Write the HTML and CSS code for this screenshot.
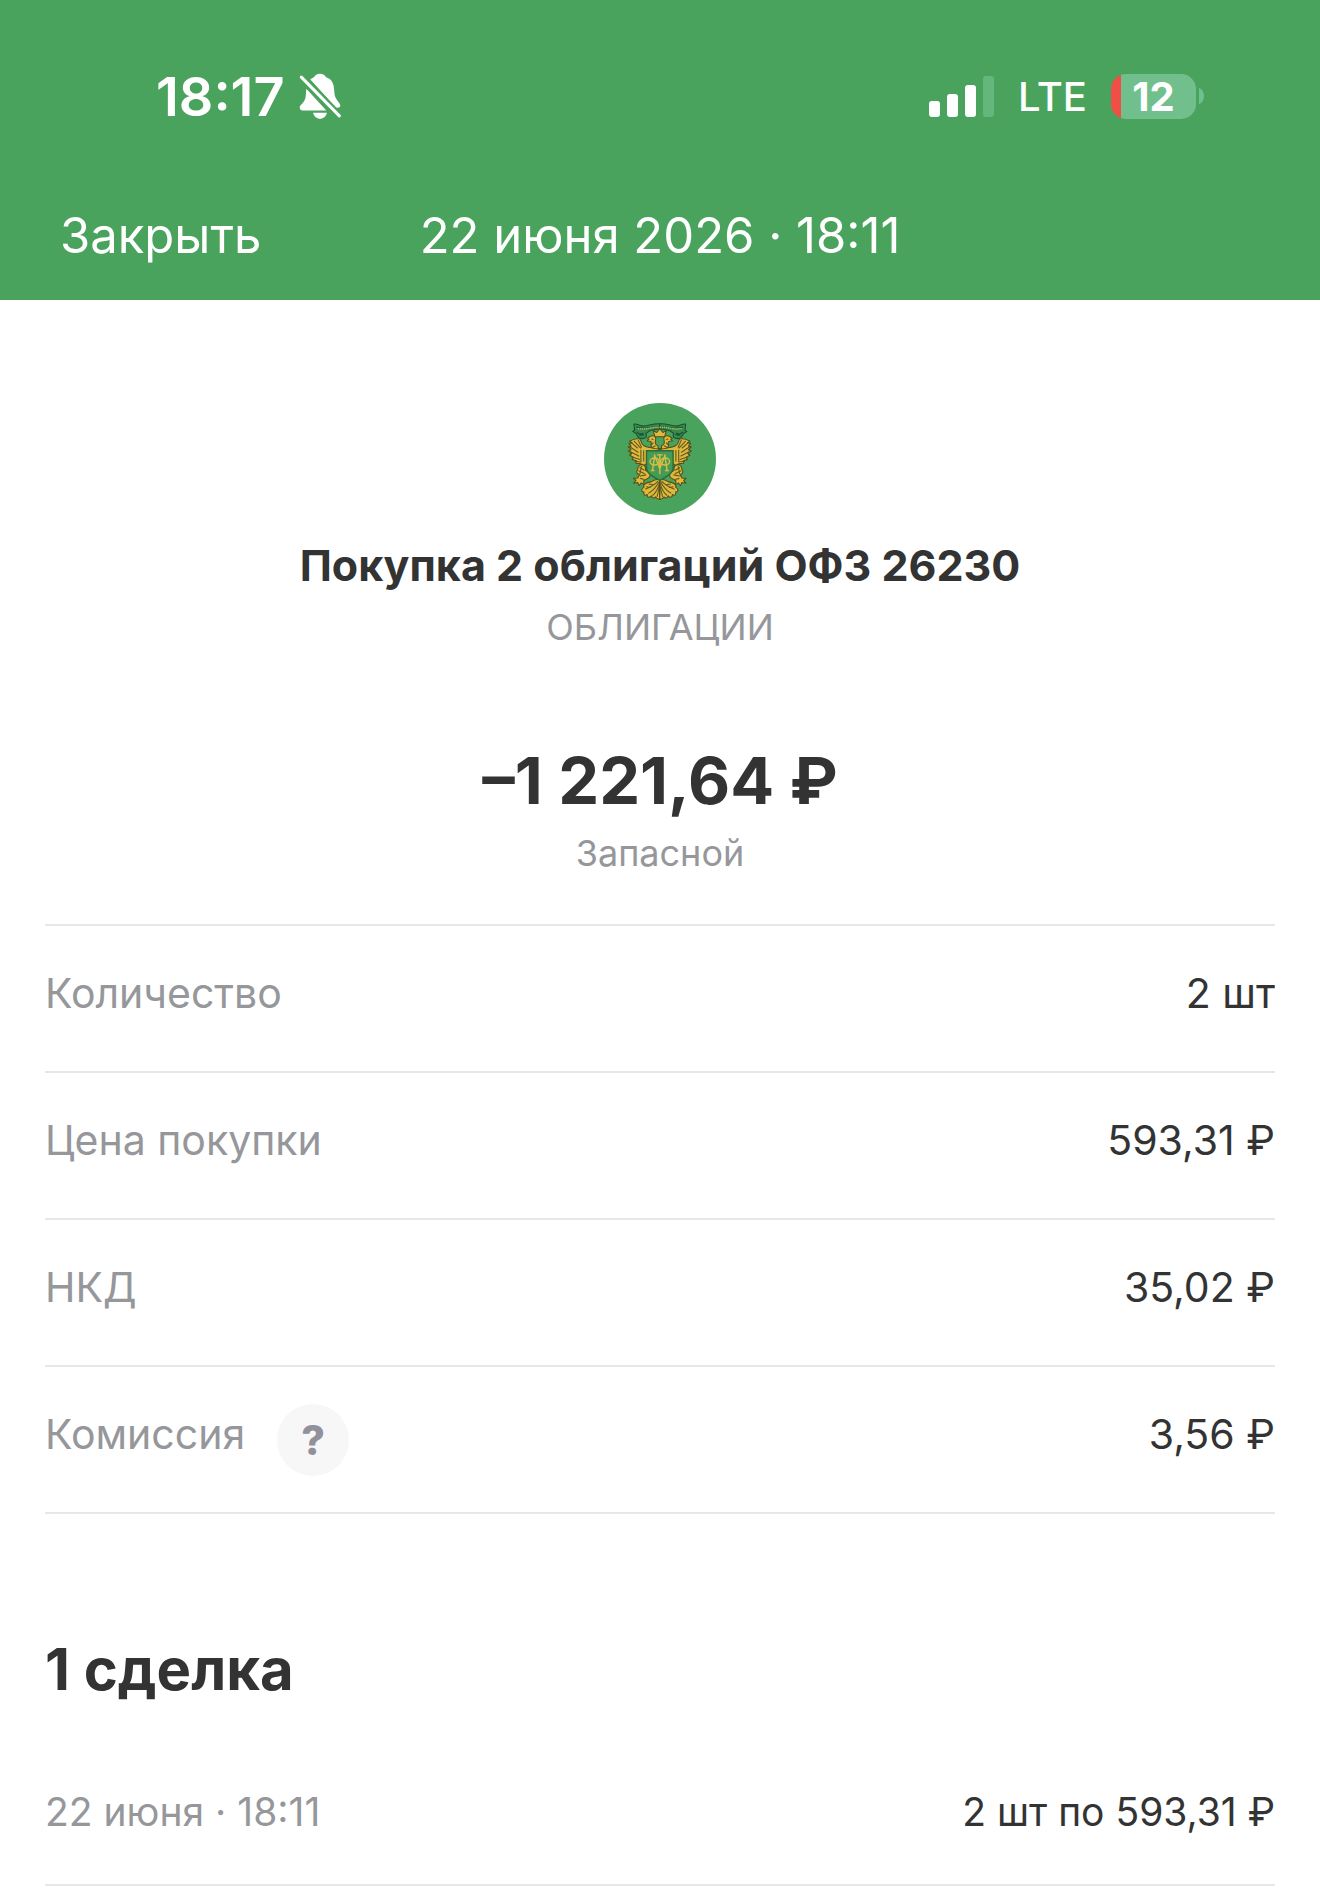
FILE: index.html
```html
<!DOCTYPE html>
<html lang="ru">
<head>
<meta charset="utf-8">
<meta name="viewport" content="width=device-width, initial-scale=1">
<title>Покупка 2 облигаций ОФЗ 26230</title>
<link rel="stylesheet" href="styles.css">
</head>
<body>
<header class="header">
  <div class="status">
    <div class="status-group">
      <span class="clock">18:17</span>
      <svg class="bell" viewBox="0 0 126 140" aria-hidden="true">
        <path d="M63 2c-9 0-15 4-18 10-3 1-8 4-11 7l76 83c6 4 14 1 14-5 0-9-17-17-18-40-1-28-8-40-25-45-3-6-9-10-18-10z"/>
        <path d="M22 47c-1 9-1 17-2 24C17 91 2 94 2 104c0 5 4 8 9 8h71z"/>
        <path d="M42 119h42c-3 11-11 18-21 18s-18-7-21-18z"/>
        <path class="bell-gap" d="M8 14 119 128"/>
        <path class="bell-slash" d="M7 12 121 128"/>
      </svg>
    </div>
    <div class="status-group status-right">
      <svg class="signal" viewBox="0 0 65 41" aria-hidden="true">
        <rect x="0" y="25" width="11" height="16" rx="3"/>
        <rect x="18" y="18" width="11" height="23" rx="3"/>
        <rect x="36" y="9" width="11" height="32" rx="3"/>
        <rect class="signal-off" x="54" y="0" width="11" height="41" rx="3"/>
      </svg>
      <span class="network">LTE</span>
      <div class="battery">
        <span class="battery-body">12</span>
        <svg class="battery-tip" viewBox="0 0 5 16" aria-hidden="true"><path d="M0 0c3 1 5 4 5 8s-2 7-5 8z"/></svg>
      </div>
    </div>
  </div>
  <nav class="nav">
    <button class="close" type="button">Закрыть</button>
    <span class="nav-title">22 июня 2026 · 18:11</span>
  </nav>
</header>

<main class="main">
  <section class="summary">
    <svg class="emblem" viewBox="42 39 336 336" aria-hidden="true">
      <defs>
        <g id="half">
          <path class="gold" d="M208 177c-18-1-35-2-45-8-12-7-6-20-15-20-10-1-20 3-26 7l7 5-9 1 6 8-8 2 8 8-8 4 10 7-6 5 11 6-4 6 12 4-1 7 14 1 4 8 12-8z"/>
          <path class="ink" d="M124 158l21 18M121 171l26 17M123 185l26 14M127 200l24 8M136 213l18 2M134 155l20 21M146 152l10 22M154 180v36M162 182v32"/>
          <path class="gold" d="M203 169c-8-2-9-9-7-16 3-10-5-15-13-12-4 1-6 4-11 6l5 3-5 5 8 1c4 1 5 4 3 9-3 7 5 13 20 13z"/>
          <path class="ink" d="M184 149l6 3M190 160l-7 8M196 169l-10 5"/>
          <path class="gold" d="M157 222c-9 1-13 8-12 15-6 5-2 14 5 14l-5 10-12 1 7 6-7 8 12-2 4 9 6-8 8 5-1-11 12-7c8-4 8-11 2-17l-9-6c2-9-2-15-10-17z"/>
          <path class="ink" d="M150 231l14 8M147 240l18 9M156 226l-5 24M151 255l18-3M152 262l12 3"/>
          <path class="gold" d="M207 264c-10 1-16 2-24 8-12 0-25 9-20 15-10 6-8 14 0 14-3 7 3 12 9 7 0 8 6 11 12 4 3 7 8 8 12 3 2 5 6 7 12 7z"/>
          <path class="ink" d="M203 270c-10 11-23 18-37 23M205 273c-7 14-18 25-30 32M207 276c-4 15-10 27-20 35M207 286l-7 29M176 278l15 2M169 286l13 2"/>
          <path class="ribbon" d="M208 106c-24-1-34 8-51 6-10-1-15-8-23-5l2 17-5 4 10 7c4 12 13 16 24 12 5-2 6-8 3-13l11-8c10-3 18-5 29-5z"/>
          <path class="ribbon-line" d="M142 115c21 10 39-4 66 0M142 129c5 7 12 9 19 3M149 139l14-2"/>
          <path class="ribbon-text" d="M145 119c22 6 38-5 63-3"/>
        </g>
      </defs>
      <circle class="disc" cx="210" cy="207" r="168"/>
      <g transform="translate(-9 -10) scale(1.05)">
        <use href="#half"/>
        <use href="#half" transform="matrix(-1 0 0 1 416 0)"/>
        <path class="gold" d="M194 143l-5-18 10 6 9-11 9 11 10-6-5 18z"/>
        <path class="shield" d="M170 183h76v48c0 18-21 27-38 37-17-10-38-19-38-37z"/>
        <path class="mono" d="M194 194l-7 46M222 194l7 46M192 194l16 40 16-40M208 194v56M182 240h11M223 240h11M200 195h16"/>
        <ellipse class="mono" cx="193" cy="214" rx="13" ry="10"/>
        <ellipse class="mono" cx="223" cy="214" rx="13" ry="10"/>
      </g>
    </svg>
    <h1 class="title">Покупка 2 облигаций ОФЗ 26230</h1>
    <p class="caption">ОБЛИГАЦИИ</p>
    <p class="amount">–1 221,64 ₽</p>
    <p class="caption account">Запасной</p>
  </section>

  <dl class="details">
    <div class="row"><dt>Количество</dt><dd>2 шт</dd></div>
    <div class="row"><dt>Цена покупки</dt><dd>593,31 ₽</dd></div>
    <div class="row"><dt>НКД</dt><dd>35,02 ₽</dd></div>
    <div class="row">
      <dt>Комиссия</dt>
      <dd class="help-cell"><button class="help" type="button" aria-label="О комиссии">?</button></dd>
      <dd>3,56 ₽</dd>
    </div>
  </dl>

  <h2 class="deals-title">1 сделка</h2>
  <dl class="deals">
    <div class="row deal"><dt>22 июня · 18:11</dt><dd>2 шт по 593,31 ₽</dd></div>
  </dl>
</main>
</body>
</html>
```
FILE: styles.css
```css
* {
  box-sizing: border-box;
}

body,
h1,
h2,
p,
dl,
dd {
  margin: 0;
}

body {
  background: #fff;
  color: #333;
  font-family: Inter, "Liberation Sans", sans-serif;
}

button {
  border: 0;
  padding: 0;
  font-family: inherit;
  cursor: pointer;
}

.header {
  background: #4aa35d;
  color: #fff;
}

.status {
  display: flex;
  align-items: center;
  justify-content: space-between;
  height: 170px;
  padding: 22px 116px 0 156px;
}

.status-group {
  display: flex;
  align-items: center;
}

.clock {
  font-size: 54px;
  font-weight: 600;
}

.bell {
  width: 42px;
  height: 47px;
  margin-left: 14px;
  fill: #fff;
}

.bell-gap {
  stroke: #4aa35d;
  stroke-width: 24px;
}

.bell-slash {
  stroke: #fff;
  stroke-width: 9px;
  stroke-linecap: round;
}

.signal {
  width: 65px;
  height: 41px;
  fill: #fff;
}

.signal-off {
  fill: #63b77a;
}

.network {
  margin: 0 24px;
  font-size: 40px;
  font-weight: 500;
}

.battery {
  display: flex;
  align-items: center;
  gap: 3px;
}

.battery-body {
  width: 85px;
  height: 45px;
  border-radius: 15px;
  background: linear-gradient(to right, #f04f48 10px, #70bf8c 10px);
  font-size: 40px;
  font-weight: 700;
  line-height: 45px;
  text-align: center;
}

.battery-tip {
  width: 5px;
  height: 16px;
  fill: #70bf8c;
}

.nav {
  display: grid;
  grid-template-columns: 1fr auto 1fr;
  align-items: center;
  height: 130px;
  padding: 0 60px;
  font-size: 49px;
}

.close {
  justify-self: start;
  background: none;
  color: inherit;
  font-size: inherit;
}

.main {
  padding: 103px 45px 0;
}

.summary {
  display: flex;
  flex-direction: column;
  align-items: center;
  text-align: center;
}

.emblem {
  width: 112px;
  height: 112px;
  fill: none;
}

.disc {
  fill: #4aa35d;
}

.gold {
  fill: #dfb83c;
  stroke: #514d1c;
  stroke-width: 3px;
  stroke-linejoin: round;
}

.ink {
  stroke: #5d591f;
  stroke-width: 3px;
}

.ribbon {
  fill: #388b50;
  stroke: #174f31;
  stroke-width: 3px;
}

.ribbon-line {
  stroke: #174f31;
  stroke-width: 3px;
}

.ribbon-text {
  stroke: #b4c15b;
  stroke-width: 4px;
  stroke-dasharray: 4 2;
}

.shield {
  fill: #439b57;
  stroke: #2e6c36;
  stroke-width: 4px;
}

.mono {
  stroke: #dfbd42;
  stroke-width: 4px;
}

.title {
  margin-top: 24px;
  font-size: 43px;
  font-weight: 700;
  line-height: 52px;
}

.caption {
  margin-top: 14px;
  color: #96979b;
  font-size: 36px;
  line-height: 44px;
}

.amount {
  margin-top: 94px;
  font-size: 65px;
  font-weight: 700;
  line-height: 76px;
}

.account {
  margin-top: 12px;
}

.details {
  margin-top: 49px;
  border-top: 2px solid #e7e7e8;
}

.row {
  display: flex;
  align-items: center;
  min-height: 147px;
  border-bottom: 2px solid #e7e7e8;
  font-size: 41px;
  line-height: 52px;
}

.row dt,
.row dd {
  padding-bottom: 12px;
}

.row dt {
  color: #96979b;
}

.row dd:last-child {
  margin-left: auto;
}

.row .help-cell {
  margin-left: 32px;
  padding-bottom: 0;
}

.help {
  display: block;
  width: 72px;
  height: 72px;
  border-radius: 50%;
  background: #f7f7f8;
  color: #91919b;
  font-size: 41px;
  font-weight: 800;
}

.deals-title {
  margin-top: 120px;
  font-size: 58px;
  font-weight: 700;
  line-height: 70px;
}

.deals {
  margin-top: 47px;
}

.deal {
  min-height: 135px;
  font-size: 39px;
}
```
